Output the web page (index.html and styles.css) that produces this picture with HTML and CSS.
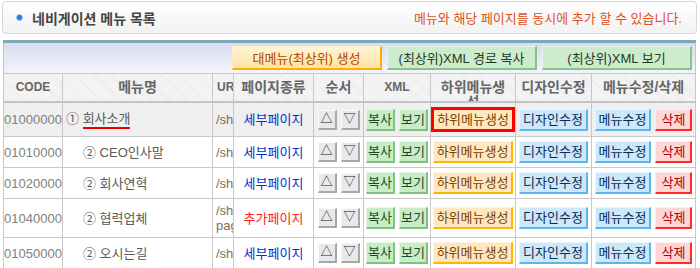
FILE: index.html
```html
<!DOCTYPE html>
<html lang="ko">
<head>
  <meta charset="UTF-8">
  <meta name="viewport" content="width=device-width, initial-scale=1">
  <title>네비게이션 메뉴 목록</title>
  <link rel="stylesheet" href="styles.css">
</head>
<body>

  <div class="title-box">
    <h2><span class="dot"></span>네비게이션 메뉴 목록</h2>
    <p class="notice">메뉴와 해당 페이지를 동시에 추가 할 수 있습니다.</p>
  </div>

  <div class="list-wrap">
    <div class="toolbar">
      <button class="btn-top orange">대메뉴(최상위) 생성</button>
      <button class="btn-top green">(최상위)XML 경로 복사</button>
      <button class="btn-top green">(최상위)XML 보기</button>
    </div>

    <table class="menu-table">
      <colgroup>
        <col style="width:59px">
        <col style="width:150px">
        <col style="width:21px">
        <col style="width:80px">
        <col style="width:50px">
        <col style="width:67px">
        <col style="width:85px">
        <col style="width:76px">
        <col>
      </colgroup>
      <thead>
        <tr>
          <th><div class="hd en">CODE</div></th>
          <th><div class="hd">메뉴명</div></th>
          <th><div class="hd en">URL</div></th>
          <th><div class="hd">페이지종류</div></th>
          <th><div class="hd">순서</div></th>
          <th><div class="hd en">XML</div></th>
          <th><div class="hd">하위메뉴생성</div></th>
          <th><div class="hd">디자인수정</div></th>
          <th><div class="hd">메뉴수정/삭제</div></th>
        </tr>
      </thead>
      <tbody>
        <tr class="on">
          <td class="code">01000000</td>
          <td class="name">① <span class="current">회사소개</span></td>
          <td class="url"><div>/shop/content.php?co=about</div></td>
          <td class="type">세부페이지</td>
          <td><div class="btns"><button class="btn gray">△</button><button class="btn gray">▽</button></div></td>
          <td><div class="btns"><button class="btn green sm">복사</button><button class="btn green sm">보기</button></div></td>
          <td><div class="btns"><button class="btn orange focus">하위메뉴생성</button></div></td>
          <td><div class="btns"><button class="btn blue">디자인수정</button></div></td>
          <td><div class="btns"><button class="btn blue">메뉴수정</button><button class="btn pink">삭제</button></div></td>
        </tr>
        <tr>
          <td class="code">01010000</td>
          <td class="name depth2">② CEO인사말</td>
          <td class="url"><div>/shop/content.php?co=ceo</div></td>
          <td class="type">세부페이지</td>
          <td><div class="btns"><button class="btn gray">△</button><button class="btn gray">▽</button></div></td>
          <td><div class="btns"><button class="btn green sm">복사</button><button class="btn green sm">보기</button></div></td>
          <td><div class="btns"><button class="btn orange">하위메뉴생성</button></div></td>
          <td><div class="btns"><button class="btn blue">디자인수정</button></div></td>
          <td><div class="btns"><button class="btn blue">메뉴수정</button><button class="btn pink">삭제</button></div></td>
        </tr>
        <tr>
          <td class="code">01020000</td>
          <td class="name depth2">② 회사연혁</td>
          <td class="url"><div>/shop/content.php?co=history</div></td>
          <td class="type">세부페이지</td>
          <td><div class="btns"><button class="btn gray">△</button><button class="btn gray">▽</button></div></td>
          <td><div class="btns"><button class="btn green sm">복사</button><button class="btn green sm">보기</button></div></td>
          <td><div class="btns"><button class="btn orange">하위메뉴생성</button></div></td>
          <td><div class="btns"><button class="btn blue">디자인수정</button></div></td>
          <td><div class="btns"><button class="btn blue">메뉴수정</button><button class="btn pink">삭제</button></div></td>
        </tr>
        <tr>
          <td class="code">01040000</td>
          <td class="name depth2">② 협력업체</td>
          <td class="url"><div>/shop/</div><div>page.php?co=partner</div></td>
          <td class="type add">추가페이지</td>
          <td><div class="btns"><button class="btn gray">△</button><button class="btn gray">▽</button></div></td>
          <td><div class="btns"><button class="btn green sm">복사</button><button class="btn green sm">보기</button></div></td>
          <td><div class="btns"><button class="btn orange">하위메뉴생성</button></div></td>
          <td><div class="btns"><button class="btn blue">디자인수정</button></div></td>
          <td><div class="btns"><button class="btn blue">메뉴수정</button><button class="btn pink">삭제</button></div></td>
        </tr>
        <tr>
          <td class="code">01050000</td>
          <td class="name depth2">② 오시는길</td>
          <td class="url"><div>/shop/content.php?co=map</div></td>
          <td class="type">세부페이지</td>
          <td><div class="btns"><button class="btn gray">△</button><button class="btn gray">▽</button></div></td>
          <td><div class="btns"><button class="btn green sm">복사</button><button class="btn green sm">보기</button></div></td>
          <td><div class="btns"><button class="btn orange">하위메뉴생성</button></div></td>
          <td><div class="btns"><button class="btn blue">디자인수정</button></div></td>
          <td><div class="btns"><button class="btn blue">메뉴수정</button><button class="btn pink">삭제</button></div></td>
        </tr>
      </tbody>
    </table>
  </div>

</body>
</html>
```

FILE: styles.css
```css
* {
  box-sizing: border-box;
}
body {
  margin: 0;
  padding: 1px 3px 0 2px;
  font-family: "Liberation Sans", "Noto Sans CJK KR", sans-serif;
  font-size: 13px;
  color: #555;
}
button {
  font-family: inherit;
  cursor: pointer;
  margin: 0;
}

/* title */
.title-box {
  display: flex;
  align-items: center;
  justify-content: space-between;
  height: 33px;
  padding: 0 14px 0 13px;
  border: 1px solid #d6d6d6;
  border-radius: 4px;
  background: linear-gradient(#fff, #f2f2f2);
}
.title-box h2 {
  display: flex;
  align-items: center;
  gap: 9px;
  margin: 0;
  font-size: 14px;
  color: #444;
}
.dot {
  width: 7px;
  height: 7px;
  border-radius: 50%;
  background: radial-gradient(circle, #1a7fe8 40%, #a6cdf3 65%, #fff 100%);
}
.notice {
  margin: 0;
  font-size: 13px;
  color: #e0501c;
}

/* list */
.list-wrap {
  margin: 6px 1px 0;
  border-top: 3px solid #7fa9bb;
}
.toolbar {
  display: flex;
  justify-content: flex-end;
  align-items: center;
  gap: 5px;
  height: 30px;
  padding-right: 3px;
  border-left: 1px solid #c4c4c4;
  border-right: 1px solid #c4c4c4;
  background: linear-gradient(#d6dcef, #f3f5fb);
}
.btn-top {
  width: 150px;
  height: 24px;
  font-size: 13px;
  border-style: solid;
  border-width: 1px 2px 2px 1px;
}
.btn-top.orange {
  background: linear-gradient(#fff4d4, #ffe3a4);
  border-color: #ffeec4 #ffae00 #ffae00 #ffeec4;
  color: #b04800;
}
.btn-top.green {
  background: #cdeccd;
  border-color: #e6f6e6 #88c488 #88c488 #e6f6e6;
  color: #1e3a1e;
}

.menu-table {
  width: 100%;
  border-collapse: collapse;
  table-layout: fixed;
}
.menu-table th,
.menu-table td {
  border: 1px solid #c8c8c8;
}
.menu-table th {
  padding: 0;
  font-size: 14px;
  color: #666;
  border-bottom: 2px solid #c4c4c4;
  background: repeating-linear-gradient(45deg, #f7f7f7 0 2px, #e8e8e8 2px 3px);
}
.hd {
  height: 27px;
  padding: 6px 4px 0;
  line-height: 15px;
  overflow: hidden;
}
.hd.en {
  font-size: 12px;
  white-space: nowrap;
}
.menu-table td {
  padding: 4px 2px;
  line-height: 15px;
  text-align: center;
  vertical-align: middle;
  white-space: nowrap;
}
.menu-table tr.on td {
  background: #efefef;
}
.menu-table td.code {
  padding: 4px 0;
  font-size: 13px;
  color: #808080;
}
.menu-table td.name {
  text-align: left;
  padding-left: 3px;
  color: #5a5a5a;
}
.menu-table td.depth2 {
  padding-left: 20px;
}
.current {
  display: inline-block;
  padding-bottom: 1px;
  border-bottom: 2px solid #ee0000;
}
.menu-table td.url {
  text-align: left;
  padding: 4px 0 4px 3px;
  color: #80704f;
}
.url div {
  width: 17px;
  overflow: hidden;
}
.type {
  color: #0033cc;
}
.type.add {
  color: #ff2020;
}

/* buttons in rows */
.btns {
  display: flex;
  justify-content: center;
  align-items: center;
  gap: 4px;
}
.btn {
  font-size: 13px;
  line-height: 15px;
  padding: 2px 3px;
  border-style: solid;
  border-width: 1px 2px 2px 1px;
}
.btn.sm {
  padding: 2px 1px;
}
.btn.gray {
  width: 19px;
  height: 20px;
  padding: 0;
  font-size: 12px;
  color: #222;
  background: #e9e9e9;
  border-color: #fafafa #a8a8a8 #a8a8a8 #fafafa;
}
.btn.green {
  background: #c8ecc8;
  border-color: #e4f6e4 #80c080 #80c080 #e4f6e4;
  color: #1c4a1c;
}
.btn.orange {
  background: #ffe8c0;
  border-color: #fff4dd #ffb600 #ffb600 #fff4dd;
  color: #7a4200;
}
.btn.orange.focus {
  border: 3px solid #ff0000;
}
.btn.blue {
  background: #cce9fb;
  border-color: #e8f6ff #5cb8ec #5cb8ec #e8f6ff;
  color: #0d2a4d;
}
.btn.pink {
  padding: 2px 5px;
  background: #ffd6d6;
  border-color: #ffeaea #ff2a2a #ff2a2a #ffeaea;
  color: #b00000;
}
```
